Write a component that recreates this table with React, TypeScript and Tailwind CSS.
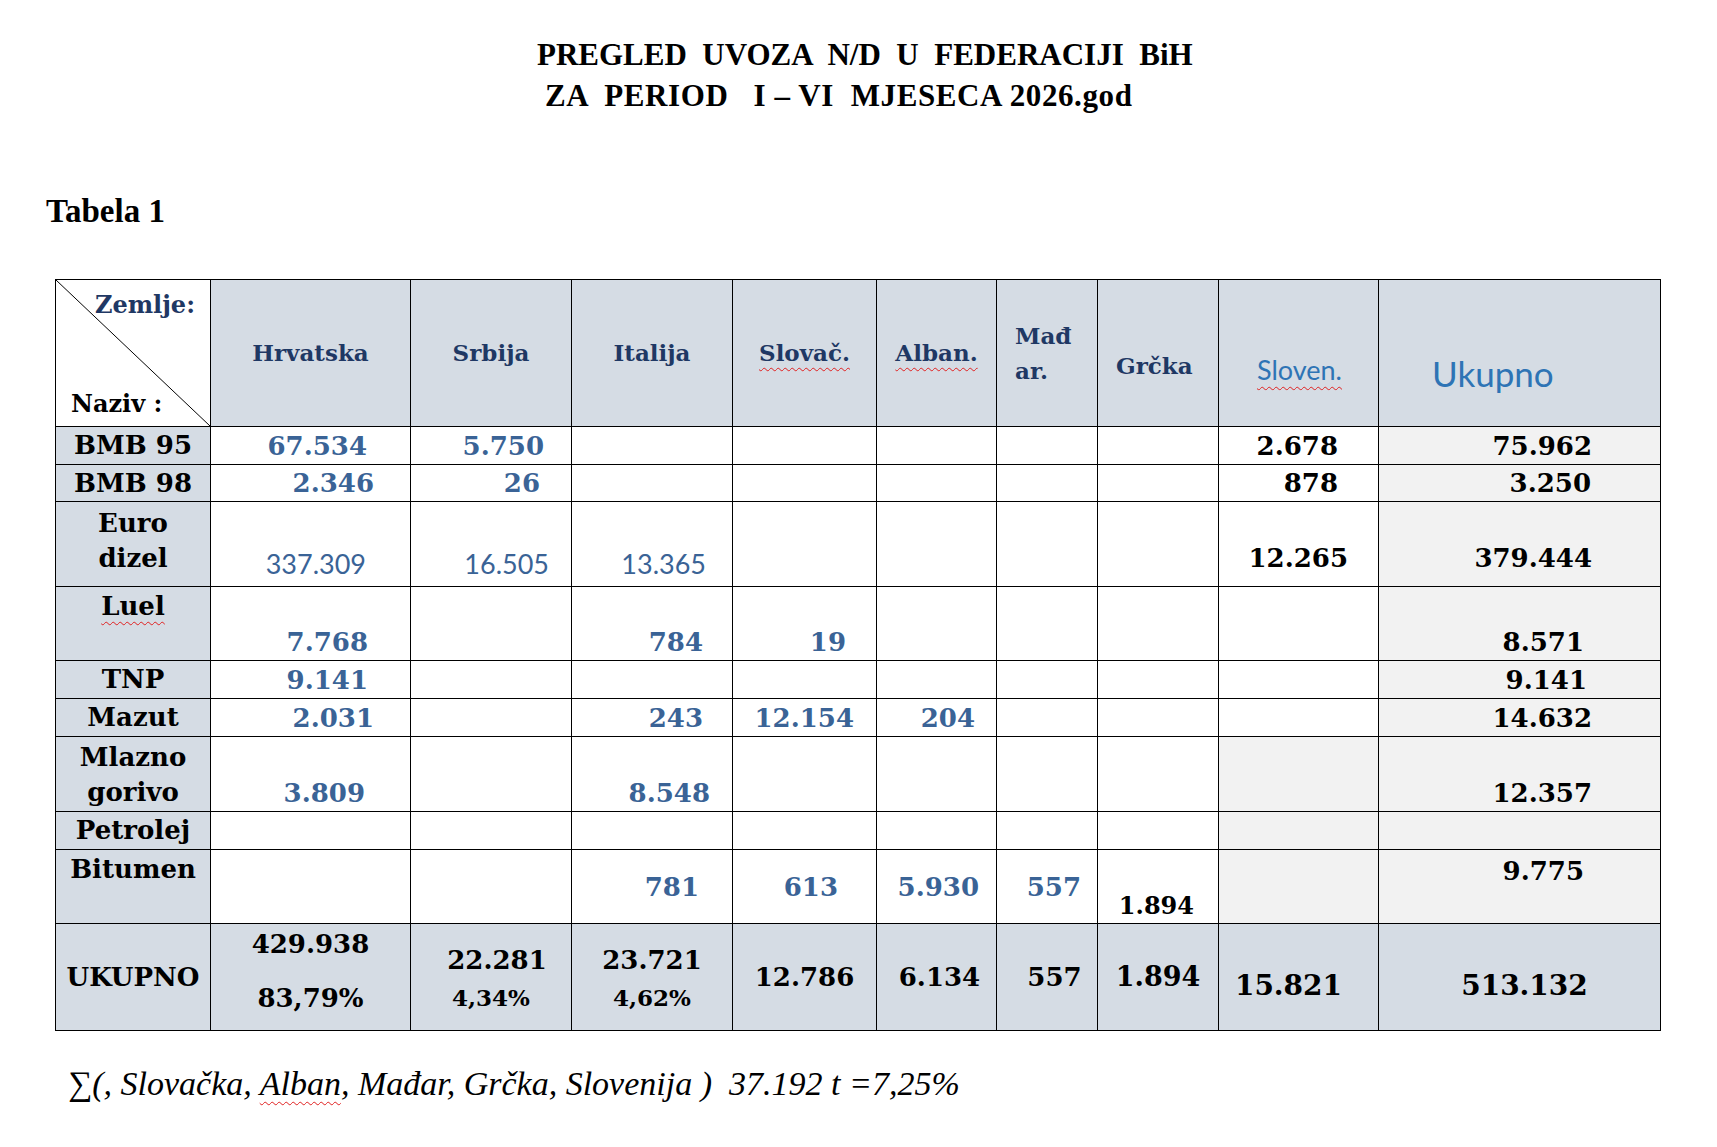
import type { ReactNode } from "react";

const SERIF = "font-['DejaVu_Serif',serif] font-bold";
const SANS = "font-['Lato','Noto_Sans',sans-serif] font-normal";
const TIMES = "font-['Liberation_Serif','Times_New_Roman',serif]";

const BLUE = "text-[#3A6396]";
const NAVY = "text-[#1F3864]";
const HEAD_BG = "bg-[#D5DCE4]";
const TOTAL_BG = "bg-[#F2F2F2]";
const SPELL =
  "underline decoration-wavy decoration-[#E02020] decoration-1 underline-offset-[6px]";

type Cell = {
  text?: ReactNode;
  className?: string;
  font?: "serif" | "sans";
  size?: string;
  bg?: string;
};

type Row = {
  label: ReactNode;
  labelClass: string;
  height: string;
  cells: Cell[];
};

const rows: Row[] = [
  {
    label: "BMB 95",
    labelClass: "align-middle",
    height: "h-[38px]",
    cells: [
      { text: "67.534", className: `${BLUE} text-right pr-[43px] align-middle` },
      { text: "5.750", className: `${BLUE} text-right pr-[27px] align-middle` },
      {},
      {},
      {},
      {},
      {},
      { text: "2.678", className: "text-black text-right pr-[40px] align-middle" },
      { text: "75.962", className: "text-black text-right pr-[68px] align-middle", bg: TOTAL_BG },
    ],
  },
  {
    label: "BMB 98",
    labelClass: "align-middle",
    height: "h-[37px]",
    cells: [
      { text: "2.346", className: `${BLUE} text-right pr-[36px] align-middle` },
      { text: "26", className: `${BLUE} text-right pr-[31px] align-middle` },
      {},
      {},
      {},
      {},
      {},
      { text: "878", className: "text-black text-right pr-[40px] align-middle" },
      { text: "3.250", className: "text-black text-right pr-[69px] align-middle", bg: TOTAL_BG },
    ],
  },
  {
    label: (
      <>
        Euro
        <br />
        dizel
      </>
    ),
    labelClass: "align-top pt-[4px]",
    height: "h-[85px]",
    cells: [
      { text: "337.309", font: "sans", size: "text-[27px]", className: `${BLUE} text-right pr-[44px] align-bottom pb-[6px]` },
      { text: "16.505", font: "sans", size: "text-[27px]", className: `${BLUE} text-right pr-[22px] align-bottom pb-[6px]` },
      { text: "13.365", font: "sans", size: "text-[27px]", className: `${BLUE} text-right pr-[26px] align-bottom pb-[6px]` },
      {},
      {},
      {},
      {},
      { text: "12.265", className: "text-black text-right pr-[30px] align-bottom pb-[12px]" },
      { text: "379.444", className: "text-black text-right pr-[68px] align-bottom pb-[12px]", bg: TOTAL_BG },
    ],
  },
  {
    label: <span className={SPELL}>Luel</span>,
    labelClass: "align-top pt-[2px]",
    height: "h-[74px]",
    cells: [
      { text: "7.768", className: `${BLUE} text-right pr-[42px] align-bottom pb-[2px]` },
      {},
      { text: "784", className: `${BLUE} text-right pr-[29px] align-bottom pb-[2px]` },
      { text: "19", className: `${BLUE} text-right pr-[30px] align-bottom pb-[2px]` },
      {},
      {},
      {},
      {},
      { text: "8.571", className: "text-black text-right pr-[76px] align-bottom pb-[2px]", bg: TOTAL_BG },
    ],
  },
  {
    label: "TNP",
    labelClass: "align-middle",
    height: "h-[38px]",
    cells: [
      { text: "9.141", className: `${BLUE} text-right pr-[42px] align-middle` },
      {},
      {},
      {},
      {},
      {},
      {},
      {},
      { text: "9.141", className: "text-black text-right pr-[73px] align-middle", bg: TOTAL_BG },
    ],
  },
  {
    label: "Mazut",
    labelClass: "align-middle",
    height: "h-[38px]",
    cells: [
      { text: "2.031", className: `${BLUE} text-right pr-[36px] align-middle` },
      {},
      { text: "243", className: `${BLUE} text-right pr-[29px] align-middle` },
      { text: "12.154", className: `${BLUE} text-right pr-[22px] align-middle` },
      { text: "204", className: `${BLUE} text-right pr-[21px] align-middle` },
      {},
      {},
      {},
      { text: "14.632", className: "text-black text-right pr-[68px] align-middle", bg: TOTAL_BG },
    ],
  },
  {
    label: (
      <>
        Mlazno
        <br />
        gorivo
      </>
    ),
    labelClass: "align-top pt-[3px]",
    height: "h-[75px]",
    cells: [
      { text: "3.809", className: `${BLUE} text-right pr-[45px] align-bottom pb-[2px]` },
      {},
      { text: "8.548", className: `${BLUE} text-right pr-[22px] align-bottom pb-[2px]` },
      {},
      {},
      {},
      {},
      { bg: TOTAL_BG },
      { text: "12.357", className: "text-black text-right pr-[68px] align-bottom pb-[2px]", bg: TOTAL_BG },
    ],
  },
  {
    label: "Petrolej",
    labelClass: "align-middle",
    height: "h-[38px]",
    cells: [{}, {}, {}, {}, {}, {}, {}, { bg: TOTAL_BG }, { bg: TOTAL_BG }],
  },
  {
    label: "Bitumen",
    labelClass: "align-top pt-[2px]",
    height: "h-[74px]",
    cells: [
      {},
      {},
      { text: "781", className: `${BLUE} text-right pr-[33px] align-middle` },
      { text: "613", className: `${BLUE} text-right pr-[38px] align-middle` },
      { text: "5.930", className: `${BLUE} text-right pr-[17px] align-middle` },
      { text: "557", className: `${BLUE} text-right pr-[16px] align-middle` },
      { text: "1.894", size: "text-[24px]", className: "text-black text-right pr-[24px] align-bottom pb-[1px]" },
      { bg: TOTAL_BG },
      { text: "9.775", className: "text-black text-right pr-[76px] align-top pt-[5px]", bg: TOTAL_BG },
    ],
  },
];

function Diagonal() {
  return (
    <svg
      className="pointer-events-none absolute inset-0 h-full w-full"
      viewBox="0 0 155 147"
      preserveAspectRatio="none"
    >
      <line x1="0" y1="0" x2="155" y2="147" stroke="#000" strokeWidth="1" />
    </svg>
  );
}

function BodyCell({ cell }: { cell: Cell }) {
  const font = cell.font === "sans" ? SANS : SERIF;
  const size = cell.size ?? "text-[26px]";
  const bg = cell.bg ?? "bg-white";
  return (
    <td
      className={`border border-black p-0 leading-[32px] whitespace-nowrap ${font} ${size} ${bg} ${cell.className ?? ""}`}
    >
      {cell.text}
    </td>
  );
}

function PriceTable() {
  return (
    <table className="w-[1605px] table-fixed border-collapse border border-black">
      <colgroup>
        <col className="w-[155px]" />
        <col className="w-[200px]" />
        <col className="w-[161px]" />
        <col className="w-[161px]" />
        <col className="w-[144px]" />
        <col className="w-[120px]" />
        <col className="w-[101px]" />
        <col className="w-[121px]" />
        <col className="w-[160px]" />
        <col className="w-[282px]" />
      </colgroup>
      <thead>
        <tr className="h-[147px]">
          <th className={`relative border border-black bg-white p-0 align-top ${SERIF} text-[24px] leading-[32px]`}>
            <Diagonal />
            <div className="flex h-[146px] flex-col justify-between">
              <div className={`pr-[15px] pt-[9px] text-right ${NAVY}`}>Zemlje:</div>
              <div className="pb-[6px] pl-[15px] text-left text-black">Naziv :</div>
            </div>
          </th>
          <th className={`border border-black p-0 align-middle ${HEAD_BG} ${SERIF} ${NAVY} text-[23px] leading-[32px]`}>
            Hrvatska
          </th>
          <th className={`border border-black p-0 align-middle ${HEAD_BG} ${SERIF} ${NAVY} text-[23px] leading-[32px]`}>
            Srbija
          </th>
          <th className={`border border-black p-0 align-middle ${HEAD_BG} ${SERIF} ${NAVY} text-[23px] leading-[32px]`}>
            Italija
          </th>
          <th className={`border border-black p-0 align-middle ${HEAD_BG} ${SERIF} ${NAVY} text-[23px] leading-[32px]`}>
            <span className={SPELL}>Slovač.</span>
          </th>
          <th className={`border border-black p-0 align-middle ${HEAD_BG} ${SERIF} ${NAVY} text-[23px] leading-[32px]`}>
            <span className={SPELL}>Alban.</span>
          </th>
          <th className={`border border-black p-0 pl-[18px] text-left align-middle ${HEAD_BG} ${SERIF} ${NAVY} text-[23px] leading-[35px]`}>
            Mađ
            <br />
            ar.
          </th>
          <th className={`border border-black p-0 pl-[18px] pt-[25px] text-left align-middle ${HEAD_BG} ${SERIF} ${NAVY} text-[23px] leading-[32px]`}>
            Grčka
          </th>
          <th className={`border border-black p-0 pl-[38px] pt-[33px] text-left align-middle ${HEAD_BG} ${SANS} text-[27px] leading-[32px] text-[#2E74B5]`}>
            <span className={SPELL}>Sloven.</span>
          </th>
          <th className={`border border-black p-0 pl-[53px] pt-[39px] text-left align-middle ${HEAD_BG} ${SANS} text-[35px] leading-[40px] text-[#2E74B5]`}>
            Ukupno
          </th>
        </tr>
      </thead>
      <tbody>
        {rows.map((row, i) => (
          <tr key={i} className={row.height}>
            <td
              className={`border border-black p-0 text-center text-[26px] leading-[35px] text-black whitespace-nowrap ${HEAD_BG} ${SERIF} ${row.labelClass}`}
            >
              {row.label}
            </td>
            {row.cells.map((cell, j) => (
              <BodyCell key={j} cell={cell} />
            ))}
          </tr>
        ))}
        <tr className={`h-[107px] ${HEAD_BG}`}>
          <td className={`border border-black p-0 text-center align-middle text-[26px] leading-[32px] text-black ${SERIF}`}>
            UKUPNO
          </td>
          <td className={`border border-black p-0 pt-[4px] text-center align-top text-[26px] leading-[32px] text-black ${SERIF}`}>
            <div>429.938</div>
            <div className="mt-[22px]">83,79%</div>
          </td>
          <td className={`border border-black p-0 pt-[20px] text-center align-top text-[26px] leading-[32px] text-black ${SERIF}`}>
            <div className="pl-[12px]">22.281</div>
            <div className="mt-[6px] text-[23px]">4,34%</div>
          </td>
          <td className={`border border-black p-0 pt-[20px] text-center align-top text-[26px] leading-[32px] text-black ${SERIF}`}>
            <div>23.721</div>
            <div className="mt-[6px] text-[23px]">4,62%</div>
          </td>
          <td className={`border border-black p-0 text-center align-middle text-[26px] leading-[32px] text-black ${SERIF}`}>
            12.786
          </td>
          <td className={`border border-black p-0 pl-[6px] text-center align-middle text-[26px] leading-[32px] text-black ${SERIF}`}>
            6.134
          </td>
          <td className={`border border-black p-0 pl-[15px] text-center align-middle text-[26px] leading-[32px] text-black ${SERIF}`}>
            557
          </td>
          <td className={`border border-black p-0 text-center align-middle text-[27px] leading-[32px] text-black ${SERIF}`}>
            1.894
          </td>
          <td className={`border border-black p-0 pb-[28px] pr-[20px] text-center align-bottom text-[28px] leading-[32px] text-black ${SERIF}`}>
            15.821
          </td>
          <td className={`border border-black p-0 pb-[28px] pl-[10px] text-center align-bottom text-[28px] leading-[32px] text-black ${SERIF}`}>
            513.132
          </td>
        </tr>
      </tbody>
    </table>
  );
}

export default function App() {
  return (
    <div className="min-h-[1147px] w-[1717px] bg-white text-black">
      <div className={`pt-[34px] ${TIMES} text-[31px] font-bold leading-[41px]`}>
        <div className="whitespace-pre pl-[537px]">PREGLED  UVOZA  N/D  U  FEDERACIJI  BiH</div>
        <div className="whitespace-pre pl-[545px] tracking-[0.6px]">ZA  PERIOD   I – VI  MJESECA 2026.god</div>
      </div>

      <div className={`mt-[77px] pl-[46px] ${TIMES} text-[33px] font-bold leading-[37px]`}>
        Tabela 1
      </div>

      <div className="mt-[49px] pl-[55px]">
        <PriceTable />
      </div>

      <div className={`mt-[33px] whitespace-pre pl-[68px] ${TIMES} text-[34px] italic leading-[40px]`}>
        <span className="not-italic">∑</span>(, Slovačka, <span className={SPELL}>Alban</span>, Mađar, Grčka, Slovenija )  37.192 t =7,25%
      </div>
    </div>
  );
}
